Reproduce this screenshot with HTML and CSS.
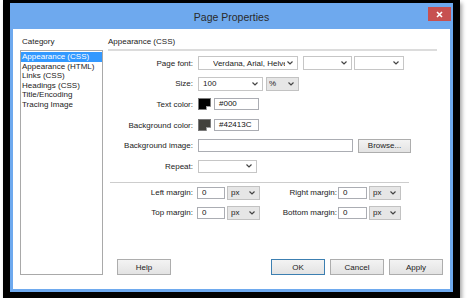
FILE: index.html
```html
<!DOCTYPE html>
<html lang="en">
<head>
  <meta charset="UTF-8" />
  <title>Page Properties</title>
  <link rel="stylesheet" href="styles.css">
</head>
<body>

  <div class="frame">
    <div class="window">

      <!-- title bar -->
      <div class="titlebar">
        <span class="title">Page Properties</span>
        <span class="close">
          <svg width="7" height="7" viewBox="0 0 7 7"><path d="M1 1 L6 6 M6 1 L1 6" stroke="#fff" stroke-width="1.6" /></svg>
        </span>
      </div>

      <div class="content">

        <!-- category list -->
        <div class="category">
          <div class="cat-label">Category</div>
          <ul class="cat-list">
            <li class="selected">Appearance (CSS)</li>
            <li>Appearance (HTML)</li>
            <li>Links (CSS)</li>
            <li>Headings (CSS)</li>
            <li>Title/Encoding</li>
            <li>Tracing Image</li>
          </ul>
        </div>

        <!-- settings panel -->
        <div class="panel">
          <div class="panel-head">Appearance (CSS)</div>

          <div class="form">
            <div class="row">
              <label>Page font:</label>
              <div class="ctrls">
                <div class="select sel-font"><span class="val">Verdana, Arial, Helvetica, sans-serif</span><svg width="6" height="4" viewBox="0 0 6 4"><path d="M0.5 0.5 L3 3 L5.5 0.5" stroke="#444" stroke-width="1.2" fill="none" /></svg></div>
                <div class="select sel-style"><span class="val"></span><svg width="6" height="4" viewBox="0 0 6 4"><path d="M0.5 0.5 L3 3 L5.5 0.5" stroke="#444" stroke-width="1.2" fill="none" /></svg></div>
                <div class="select sel-weight"><span class="val"></span><svg width="6" height="4" viewBox="0 0 6 4"><path d="M0.5 0.5 L3 3 L5.5 0.5" stroke="#444" stroke-width="1.2" fill="none" /></svg></div>
              </div>
            </div>

            <div class="row">
              <label>Size:</label>
              <div class="ctrls">
                <div class="select sel-size"><span class="val">100</span><svg width="6" height="4" viewBox="0 0 6 4"><path d="M0.5 0.5 L3 3 L5.5 0.5" stroke="#444" stroke-width="1.2" fill="none" /></svg></div>
                <div class="select gray sel-unit"><span class="val">%</span><svg width="6" height="4" viewBox="0 0 6 4"><path d="M0.5 0.5 L3 3 L5.5 0.5" stroke="#444" stroke-width="1.2" fill="none" /></svg></div>
              </div>
            </div>

            <div class="row">
              <label>Text color:</label>
              <div class="ctrls">
                <div class="swatch swatch-black"></div>
                <div class="input in-color">#000</div>
              </div>
            </div>

            <div class="row">
              <label>Background color:</label>
              <div class="ctrls">
                <div class="swatch swatch-dark"></div>
                <div class="input in-color">#42413C</div>
              </div>
            </div>

            <div class="row">
              <label>Background image:</label>
              <div class="ctrls">
                <div class="input in-file"></div>
                <div class="btn btn-browse">Browse...</div>
              </div>
            </div>

            <div class="row">
              <label>Repeat:</label>
              <div class="ctrls">
                <div class="select sel-repeat"><span class="val"></span><svg width="6" height="4" viewBox="0 0 6 4"><path d="M0.5 0.5 L3 3 L5.5 0.5" stroke="#444" stroke-width="1.2" fill="none" /></svg></div>
              </div>
            </div>
          </div>

          <div class="rule"></div>

          <div class="margins">
            <label>Left margin:</label>
            <div class="input in-margin">0</div>
            <div class="select gray sel-px"><span class="val">px</span><svg width="6" height="4" viewBox="0 0 6 4"><path d="M0.5 0.5 L3 3 L5.5 0.5" stroke="#444" stroke-width="1.2" fill="none" /></svg></div>
            <label>Right margin:</label>
            <div class="input in-margin">0</div>
            <div class="select gray sel-px"><span class="val">px</span><svg width="6" height="4" viewBox="0 0 6 4"><path d="M0.5 0.5 L3 3 L5.5 0.5" stroke="#444" stroke-width="1.2" fill="none" /></svg></div>

            <label>Top margin:</label>
            <div class="input in-margin">0</div>
            <div class="select gray sel-px"><span class="val">px</span><svg width="6" height="4" viewBox="0 0 6 4"><path d="M0.5 0.5 L3 3 L5.5 0.5" stroke="#444" stroke-width="1.2" fill="none" /></svg></div>
            <label>Bottom margin:</label>
            <div class="input in-margin">0</div>
            <div class="select gray sel-px"><span class="val">px</span><svg width="6" height="4" viewBox="0 0 6 4"><path d="M0.5 0.5 L3 3 L5.5 0.5" stroke="#444" stroke-width="1.2" fill="none" /></svg></div>
          </div>

          <div class="buttons">
            <div class="btn">Help</div>
            <div class="btn btn-default">OK</div>
            <div class="btn">Cancel</div>
            <div class="btn">Apply</div>
          </div>
        </div>

      </div>
    </div>
  </div>

</body>
</html>
```

FILE: styles.css
```css
body {
  margin: 0;
  background: #fff;
  font-family: "Liberation Sans", Arial, sans-serif;
  font-size: 8px;
  color: #222;
}

.frame {
  margin-left: 3px;
  width: 443px;
  border: solid #000;
  border-width: 3px 7px 6px;
  box-shadow: 2px 3px 4px rgba(0, 0, 0, 0.35);
}

.window {
  height: 289px;
  box-sizing: border-box;
  background: #6ea9ee;
  padding: 0 3px 3px;
  display: flex;
  flex-direction: column;
}

.titlebar {
  height: 26px;
  position: relative;
  display: flex;
  align-items: center;
  justify-content: center;
}

.title {
  font-size: 10.5px;
  color: #2a2a2a;
  padding-top: 2px;
}

.close {
  position: absolute;
  top: 4px;
  right: -1px;
  width: 23px;
  height: 14px;
  background: #c75050;
  display: flex;
  align-items: center;
  justify-content: center;
}

.content {
  flex: 1;
  background: #fff;
  display: grid;
  grid-template-columns: 83px 1fr;
  column-gap: 5px;
  padding: 0 7px 14px;
}

/* left list */
.category {
  display: flex;
  flex-direction: column;
}

.cat-label {
  height: 21px;
  box-sizing: border-box;
  padding: 8px 0 0 2px;
  line-height: 10px;
}

.cat-list {
  flex: 1;
  margin: 0;
  padding: 1px 0 0;
  list-style: none;
  border: 1px solid #a9a9a9;
}

.cat-list li {
  line-height: 9.5px;
  padding-left: 1px;
}

.cat-list li.selected {
  background: #3399ff;
  color: #fff;
}

/* right panel */
.panel {
  display: flex;
  flex-direction: column;
}

.panel-head {
  height: 22px;
  box-sizing: border-box;
  padding-top: 8px;
  line-height: 10px;
  border-bottom: 2px solid #dcdcdc;
  margin-right: 6px;
}

.form {
  padding-top: 2px;
}

.row {
  height: 20.6px;
  display: grid;
  grid-template-columns: 85px auto;
  column-gap: 5px;
  align-items: center;
}

.row label,
.margins label {
  text-align: right;
}

.ctrls {
  display: flex;
  align-items: center;
}

.select {
  height: 14px;
  box-sizing: border-box;
  border: 1px solid #c6c6c6;
  background: #fff;
  display: flex;
  align-items: center;
  padding: 0 4px 0 4px;
}

.select.gray {
  background: #e6e6e6;
  border-color: #c2c2c2;
}

.select .val {
  flex: 1;
  overflow: hidden;
  white-space: nowrap;
}

.select svg {
  flex: none;
  margin-left: 2px;
}

.sel-font {
  width: 100px;
  padding-left: 14px;
}
.sel-style { width: 49px; margin-left: 5px; }
.sel-weight { width: 50px; margin-left: 2px; }
.sel-size { width: 65px; }
.sel-unit { width: 33px; margin-left: 3px; padding-left: 2px; }
.sel-repeat { width: 59px; height: 13px; }
.sel-px { width: 33px; padding-left: 3px; }

.input {
  height: 12px;
  box-sizing: border-box;
  border: 1px solid #abadb3;
  background: #fff;
  padding-left: 4px;
  line-height: 10px;
  color: #111;
}

.in-color { width: 45px; margin-left: 3px; }
.in-file { width: 155px; height: 13px; }
.in-margin { width: 28px; }

.swatch {
  width: 13px;
  height: 12px;
  box-sizing: border-box;
  border: 1px solid #7a7a7a;
  position: relative;
}
.swatch-black { background: #000; }
.swatch-dark { background: #42413c; }

.swatch::after {
  content: "";
  position: absolute;
  right: -1px;
  bottom: -1px;
  width: 4px;
  height: 3px;
  background: #fff;
  border-top: 1px solid #999;
  border-left: 1px solid #999;
}

.btn {
  height: 16px;
  width: 54px;
  box-sizing: border-box;
  border: 1px solid #adadad;
  background: linear-gradient(#f3f3f3, #e3e3e3);
  display: flex;
  align-items: center;
  justify-content: center;
  color: #222;
}

.btn-browse {
  width: 53px;
  height: 14px;
  margin-left: 5px;
}

.btn-default {
  border-color: #3c7fb1;
  margin-left: auto;
}

.rule {
  margin: 5px 0 0 2px;
  width: 299px;
  height: 1px;
  background: #cdcdcd;
}

.margins {
  display: grid;
  grid-template-columns: 89px 30px 33px 78px 31px 32px;
  grid-auto-rows: 20px;
  align-items: center;
}

.margins label:nth-of-type(odd) { padding-right: 4px; }
.margins label:nth-of-type(even) { padding-right: 1px; }

.margins .in-margin:nth-child(5),
.margins .in-margin:nth-child(11) {
  width: 29px;
}

.margins .sel-px:nth-child(6),
.margins .sel-px:nth-child(12) {
  width: 32px;
}

.buttons {
  margin-top: auto;
  display: flex;
  gap: 5px;
  padding-left: 9px;
}
```
